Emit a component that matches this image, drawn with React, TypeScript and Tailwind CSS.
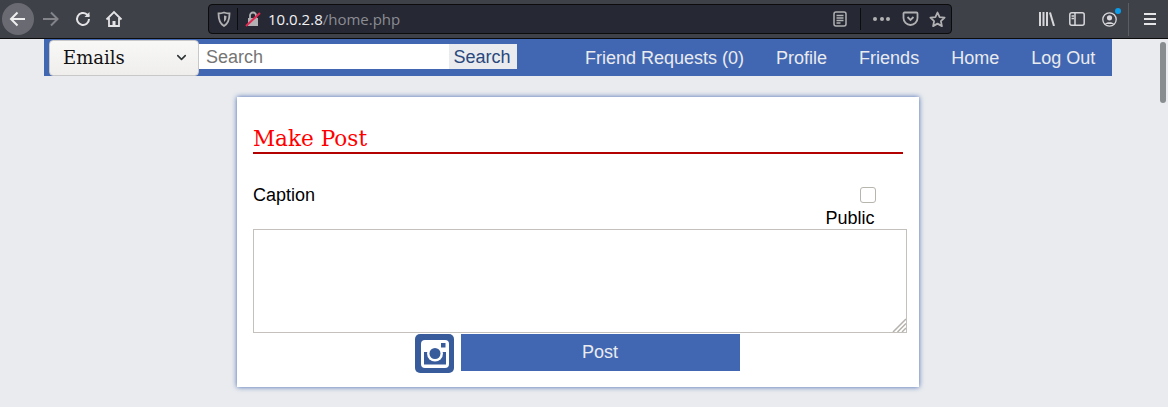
import { ChevronDown } from "lucide-react";

const navLinks = ["Friend Requests (0)", "Profile", "Friends", "Home", "Log Out"];

function BrowserBar() {
  return (
    <div className="flex h-[39px] items-center border-b border-[#0c0c0d] bg-[#3f4149] text-[#d7d7db]">
      <div className="ml-[2px] flex h-[32px] w-[32px] items-center justify-center rounded-full bg-[#6a6b72]">
        <svg width="20" height="20" viewBox="0 0 20 20" fill="none" stroke="#eeeeee" strokeWidth="2">
          <path d="M17 10H3.500M9.500 3.500L3 10l6.500 6.500" />
        </svg>
      </div>
      <svg className="ml-[7px]" width="20" height="20" viewBox="0 0 20 20" fill="none" stroke="#83848a" strokeWidth="2">
        <path d="M2 10h14M10 3.500l6.500 6.500-6.500 6.500" />
      </svg>
      <svg className="ml-[13px]" width="18" height="18" viewBox="0 0 18 18" fill="none" stroke="#e4e4e6" strokeWidth="2">
        <path d="M15 9a6 6 0 1 1-2-4.500L15 6.500" />
        <path d="M15.500 2v5h-5" fill="#e4e4e6" stroke="none" />
      </svg>
      <svg className="ml-[13px]" width="18" height="18" viewBox="0 0 18 18" fill="none" stroke="#e4e4e6" strokeWidth="1.800">
        <path d="M1.500 9.500L9 2l7.500 7.500M4 8v8h10V8" />
        <rect x="7.500" y="11" width="3" height="4" fill="#e4e4e6" stroke="none" />
      </svg>
      <div className="ml-[85px] flex h-[30px] w-[744px] items-center rounded-[4px] border border-[#0c0c0d] bg-[#262833]">
        <svg className="ml-[8px]" width="14" height="16" viewBox="0 0 14 16" fill="none" stroke="#b1b1b3" strokeWidth="1.800">
          <path d="M1.500 2.500C4 2.500 5.500 2 7 1.500c1.500.5 3 1 5.500 1 0 6-1 10-5.500 12.500C2.500 12.500 1.500 8.500 1.500 2.500z" />
          <path d="M7 4.500c1 .3 1.500.5 2.500.5 0 3-.5 4.500-2.500 6z" fill="#b1b1b3" stroke="none" />
        </svg>
        <div className="ml-[6px] h-[22px] w-px bg-[#0c0c0d]" />
        <svg className="ml-[7px]" width="16" height="18" viewBox="0 0 16 18">
          <path d="M3 8h10v8H3z" fill="#b1b1b3" />
          <path d="M5 8V5.500a3 3 0 0 1 6 0V8" fill="none" stroke="#b1b1b3" strokeWidth="1.800" />
          <path d="M1 16L15 3" stroke="#e22850" strokeWidth="2" />
        </svg>
        <span className="ml-[7px] font-['Open_Sans',sans-serif] text-[15px] leading-none text-[#f2f2f3]">
          10.0.2.8<span className="text-[#8b8c93]">/home.php</span>
        </span>
        <div className="ml-auto flex items-center">
          <svg width="14" height="16" viewBox="0 0 14 16" fill="none" stroke="#b1b1b3" strokeWidth="1.500">
            <rect x="1" y="1" width="12" height="14" rx="2" />
            <path d="M3.500 4.500h7M3.500 7h7M3.500 9.500h7M3.500 12h4" />
          </svg>
          <div className="ml-[13px] h-[22px] w-px bg-[#0c0c0d]" />
          <div className="ml-[12px] flex gap-[2.500px]">
            <div className="h-[4px] w-[4px] rounded-full bg-[#b1b1b3]" />
            <div className="h-[4px] w-[4px] rounded-full bg-[#b1b1b3]" />
            <div className="h-[4px] w-[4px] rounded-full bg-[#b1b1b3]" />
          </div>
          <svg className="ml-[12px]" width="17" height="16" viewBox="0 0 17 16" fill="none" stroke="#b1b1b3" strokeWidth="1.800">
            <path d="M2.500 1.500h12a1 1 0 0 1 1 1V7a7 7 0 0 1-14 0V2.500a1 1 0 0 1 1-1z" />
            <path d="M5.500 6l3 3 3-3" />
          </svg>
          <svg className="ml-[10px] mr-[5px]" width="17" height="17" viewBox="0 0 17 17" fill="none" stroke="#b1b1b3" strokeWidth="1.800">
            <path d="M8.500 1.500l2.100 4.600 5 .6-3.700 3.400 1 5-4.400-2.500-4.400 2.500 1-5L1.400 6.700l5-.6z" strokeLinejoin="round" />
          </svg>
        </div>
      </div>
      <svg className="ml-[87px]" width="16" height="14" viewBox="0 0 16 14" stroke="#d7d7db" strokeWidth="2" fill="none">
        <path d="M1 0v14M4.500 0v14M8 0v14M11 .5L15 14" />
      </svg>
      <svg className="ml-[14px]" width="16" height="14" viewBox="0 0 16 14" fill="none" stroke="#d7d7db" strokeWidth="1.500">
        <rect x=".8" y=".8" width="14.400" height="12.400" rx="2" />
        <path d="M6 1v12M2.500 4H5M2.500 6.500H5" />
      </svg>
      <div className="relative ml-[17px]">
        <svg width="15" height="15" viewBox="0 0 15 15" fill="none" stroke="#d7d7db" strokeWidth="1.300">
          <circle cx="7.500" cy="7.500" r="6.700" />
          <circle cx="7.500" cy="5.800" r="2.600" fill="#d7d7db" stroke="none" />
          <path d="M3 12c1-2.500 8-2.500 9 0" fill="#d7d7db" stroke="none" />
        </svg>
        <div className="absolute right-[-4px] top-[-4px] h-[6px] w-[6px] rounded-full bg-[#0a9dea]" />
      </div>
      <div className="ml-[11px] h-[33px] w-px bg-[#5c5d63]" />
      <div className="ml-[15px] flex w-[12px] flex-col gap-[3px]">
        <div className="h-[2px] bg-[#e4e4e6]" />
        <div className="h-[2px] bg-[#e4e4e6]" />
        <div className="h-[2px] bg-[#e4e4e6]" />
      </div>
    </div>
  );
}

function InstagramIcon() {
  return (
    <div className="flex h-[39px] w-[39px] items-center justify-center rounded-[5px] bg-[#385b9b]">
      <svg width="28" height="28" viewBox="0 0 28 28">
        <rect x="0" y="0" width="28" height="28" rx="4" fill="#ffffff" />
        <rect x="3" y="12" width="22" height="12.500" fill="#385b9b" />
        <circle cx="14" cy="13.500" r="8" fill="#ffffff" />
        <circle cx="14" cy="13.500" r="5.500" fill="#385b9b" />
        <rect x="20" y="3" width="4.500" height="4.500" fill="#385b9b" />
      </svg>
    </div>
  );
}

export default function App() {
  return (
    <div className="h-[407px] overflow-hidden bg-[#e9ebee] font-['Liberation_Sans',sans-serif]">
      <BrowserBar />
      <div className="flex h-[368px]">
        <div className="flex-1">
          <nav className="ml-[44px] flex h-[37px] w-[1068px] items-start bg-[#4267b2]">
            <div className="ml-[5px] mt-[1px] flex h-[36px] w-[150px] shrink-0 items-center justify-between rounded-[4px] border border-[#c8c8c8] bg-gradient-to-b from-[#f8f8f7] to-[#efeeed] pb-[1px] pl-[13px] pr-[9px] font-['DejaVu_Serif',serif] text-[18px] text-[#111111]">
              Emails
              <ChevronDown size={15} strokeWidth={2.500} className="text-[#2e3436]" />
            </div>
            <div className="mt-[5px] flex h-[25px] shrink-0 text-[18px]">
              <input
                placeholder="Search"
                className="h-full w-[250px] bg-white px-[7px] pt-[2px] text-[18px] outline-none placeholder:text-[#757575]"
              />
              <button className="h-full w-[68px] bg-[#e9ebee] pr-[2px] text-[#29487d]">Search</button>
            </div>
            <div className="ml-[68px] mt-[9px] flex shrink-0 gap-[32px] text-[18px] leading-[20px] text-[#e9ebee]">
              {navLinks.map((link) => (
                <span key={link}>{link}</span>
              ))}
            </div>
          </nav>
          <div className="ml-[237px] mt-[21px] h-[290px] w-[682px] bg-white px-[16px] pt-[29px] shadow-[0_0_5px_#4267b2]">
            <h2 className="w-[650px] border-b-2 border-[#b30000] pb-[1px] font-['DejaVu_Serif',serif] text-[21.600px] leading-[25px] text-[#ff0000]">
              Make Post
            </h2>
            <div className="flex h-[75px] justify-between text-[18px] text-black">
              <label className="mt-[31px] leading-[21px]">Caption</label>
              <div className="mr-[28.500px] mt-[33px] flex flex-col items-end">
                <input
                  type="checkbox"
                  className="mr-[-1.500px] h-[16px] w-[16px] appearance-none rounded-[3px] border border-[#b8b4ae] bg-white"
                />
                <span className="mt-[5px] leading-[21px]">Public</span>
              </div>
            </div>
            <div className="relative h-[104px] w-[654px]">
              <textarea className="block h-full w-full resize-none border border-[#c4c0bb] bg-white outline-none" />
              <svg className="absolute bottom-[1px] right-[1px]" width="14" height="14" viewBox="0 0 14 14" stroke="#b5b1ac" strokeWidth="1.500">
                <path d="M1 14L14 1M5.500 14L14 5.500M10 14l4-4" />
              </svg>
            </div>
            <div className="ml-[162px] mt-px flex items-start gap-[7px]">
              <InstagramIcon />
              <button className="h-[37px] w-[279px] bg-[#4267b2] pr-[1px] text-[18px] text-[#e9ebee]">Post</button>
            </div>
          </div>
        </div>
        <div className="w-[10px] bg-[#e9ebee] pl-[1px] pt-[3px]">
          <div className="ml-[1px] h-[61px] w-[6px] rounded-full bg-[#8a8d8f]" />
        </div>
      </div>
    </div>
  );
}
